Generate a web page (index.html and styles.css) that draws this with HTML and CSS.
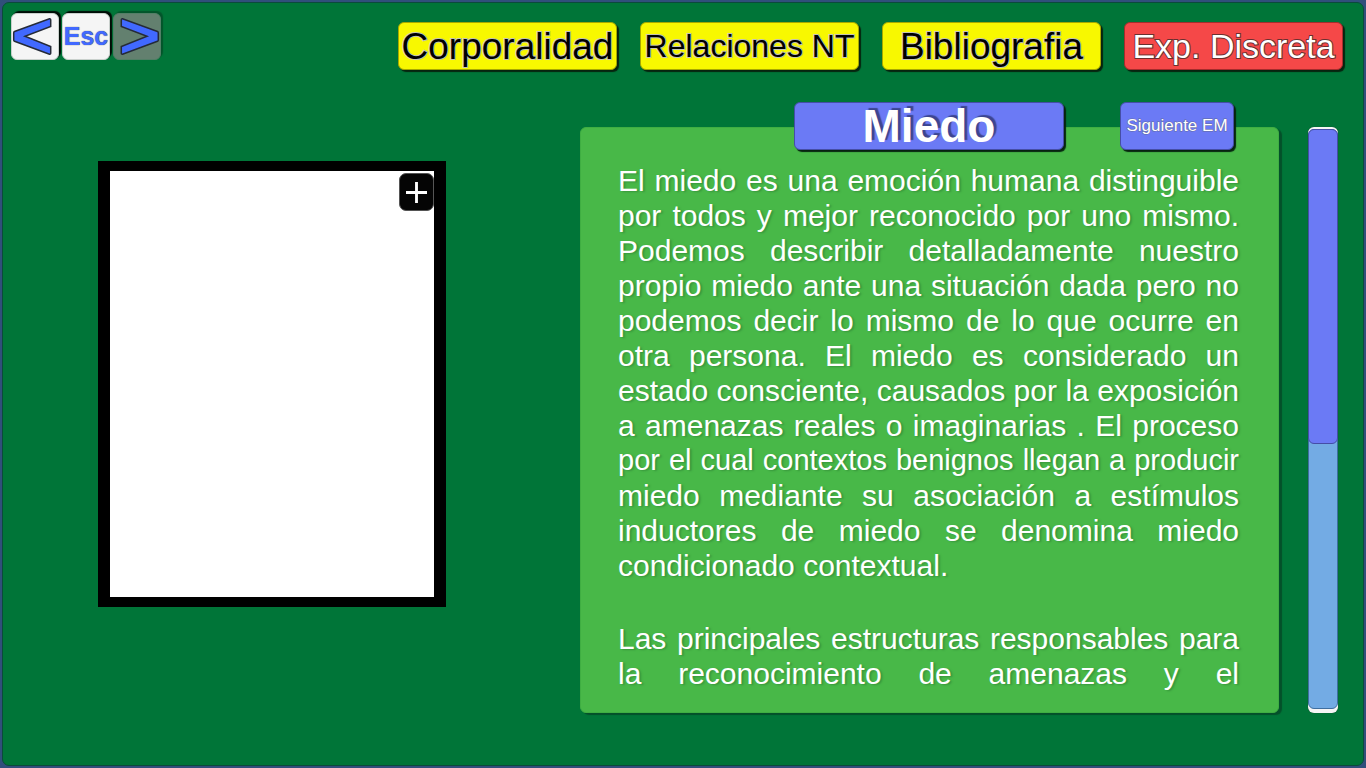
FILE: index.html
```html
<!DOCTYPE html>
<html lang="es">
<head>
<meta charset="utf-8">
<meta name="viewport" content="width=device-width, initial-scale=1">
<title>Miedo</title>
<link rel="stylesheet" href="styles.css">
</head>
<body>
<div class="screen">
  <header class="topbar">
    <nav class="history" aria-label="Navegación">
      <button class="key" type="button" aria-label="Anterior">
        <svg class="key-icon" viewBox="1 1 46 45" aria-hidden="true"><path d="M3.500 18.500 38.500 5.700Q39.700 5.500 39.700 7V13.500L14 23.300 39.700 33.500V40Q39.700 41.500 38.500 41.200L3.500 28.300Q2.700 28 2.700 27V20Q2.700 18.800 3.500 18.500Z"/></svg>
      </button>
      <button class="key" type="button">Esc</button>
      <button class="key key-off" type="button" aria-label="Siguiente" disabled>
        <svg class="key-icon" viewBox="1 1 46 45" aria-hidden="true"><path d="M44.500 18.500 9.500 5.700Q8.300 5.500 8.300 7V13.500L34 23.300 8.300 33.500V40Q8.300 41.500 9.500 41.200L44.500 28.300Q45.300 28 45.300 27V20Q45.300 18.800 44.500 18.500Z"/></svg>
      </button>
    </nav>
    <div class="actions">
      <button class="btn btn-yellow text-l" type="button">Corporalidad</button>
      <button class="btn btn-yellow text-m" type="button">Relaciones NT</button>
      <button class="btn btn-yellow text-l" type="button">Bibliografia</button>
      <button class="btn btn-red" type="button">Exp. Discreta</button>
    </div>
  </header>
  <main class="content">
    <div class="viewer">
      <button class="zoom" type="button" aria-label="Ampliar">
        <svg class="zoom-icon" viewBox="0 0 22 22" aria-hidden="true"><path d="M11 0V22M0 11H22"/></svg>
      </button>
    </div>
    <article class="panel">
      <div class="tabs">
        <h1 class="title">Miedo</h1>
        <button class="btn btn-blue" type="button">Siguiente EM</button>
      </div>
      <p class="copy">
        <span class="line">El miedo es una emoción humana distinguible</span>
        <span class="line">por todos y mejor reconocido por uno mismo.</span>
        <span class="line">Podemos describir detalladamente nuestro</span>
        <span class="line">propio miedo ante una situación dada pero no</span>
        <span class="line">podemos decir lo mismo de lo que ocurre en</span>
        <span class="line">otra persona. El miedo es considerado un</span>
        <span class="line">estado consciente, causados por la exposición</span>
        <span class="line">a amenazas reales o imaginarias . El proceso</span>
        <span class="line line-long">por el cual contextos benignos llegan a producir</span>
        <span class="line">miedo mediante su asociación a estímulos</span>
        <span class="line">inductores de miedo se denomina miedo</span>
        <span class="line line-end">condicionado contextual.</span>
      </p>
      <p class="copy">
        <span class="line">Las principales estructuras responsables para</span>
        <span class="line">la reconocimiento de amenazas y el</span>
      </p>
    </article>
    <div class="scroll"><div class="track"><div class="thumb"></div></div></div>
  </main>
</div>
</body>
</html>
```

FILE: styles.css
```css
* { box-sizing: border-box; }

body {
  margin: 0;
  padding: 2px;
  min-height: 100vh;
  display: flex;
  background: #304f7b;
  font-family: "Liberation Sans", Arial, sans-serif;
}

.screen {
  flex: 1;
  border: 1px solid #0b4a3c;
  border-radius: 7px;
  background: #007538;
}

button {
  margin: 0;
  padding: 0;
  font-family: inherit;
  white-space: nowrap;
  cursor: pointer;
}

.topbar {
  display: flex;
  justify-content: space-between;
  padding: 10px 20px 0 8px;
}

.history { display: flex; gap: 3px; }

.key {
  width: 48px;
  height: 47px;
  border: 1px solid #c9d0cc;
  border-radius: 6px;
  background: #f5f5f5;
  box-shadow: 2px -2px 1px #000c06;
  color: #4169ff;
  font-size: 25px;
  font-weight: bold;
  text-shadow: 0 0 1px #252b38;
}

.key-off {
  border-color: #527f66;
  background: #63806f;
  box-shadow: 2px -2px 1px #03552b;
}

.key-icon {
  display: block;
  width: 100%;
  height: 100%;
  fill: #4169ff;
  stroke: #252b38;
  stroke-width: 1.5;
  overflow: visible;
}

.actions { display: flex; gap: 23px; padding-top: 9px; }

.btn {
  width: 219px;
  height: 48px;
  padding-top: 1px;
  border: 1px solid;
  border-radius: 6px;
  box-shadow: 2px 2px 1px #06240f;
  paint-order: stroke fill;
}

.btn-yellow {
  border-color: #a8a800;
  background: #f8f800;
  color: #000;
  -webkit-text-stroke: 2px #c4c4b4;
}

.btn-red {
  border-color: #a52c2c;
  background: #f54848;
  color: #fff;
  font-size: 34px;
  -webkit-text-stroke: 2px #6a3030;
}

.btn-blue {
  width: 114px;
  padding: 0;
  border-color: #454ea6;
  background: #6b7af5;
  color: #fff;
  font-size: 17px;
  -webkit-text-stroke: 1px #626a9c;
}

.text-l { font-size: 37px; }
.text-m { font-size: 32px; }

.content {
  display: flex;
  align-items: flex-start;
  padding: 57px 25px 52px 95px;
}

.viewer {
  position: relative;
  width: 348px;
  height: 446px;
  margin: 34px auto 0 0;
  border: solid #000;
  border-width: 10px 12px;
  background: #fff;
}

.zoom {
  position: absolute;
  top: 2px;
  right: 0;
  width: 35px;
  height: 38px;
  padding: 6px;
  border: 1px solid #555;
  border-radius: 7px;
  background: #050505;
}

.zoom-icon {
  display: block;
  width: 100%;
  stroke: #fff;
  stroke-width: 3;
}

.panel {
  position: relative;
  flex: 0 1 699px;
  padding: 35px 39px 21px 37px;
  border: 1px solid #3fae42;
  border-radius: 6px;
  background: #48b848;
  box-shadow: 3px 2px 1px #04502a;
}

.tabs {
  position: absolute;
  top: -26px;
  right: 44px;
  display: flex;
  gap: 56px;
}

.title {
  width: 270px;
  height: 48px;
  margin: 0;
  border: 1px solid #454ea6;
  border-radius: 6px;
  background: #6b7af5;
  box-shadow: 2px 2px 1px #06240f;
  color: #fff;
  font-size: 46px;
  line-height: 46px;
  text-align: center;
  text-shadow: 3px -2px 1px #3c4590;
}

.copy {
  margin: 0 0 38px;
  color: #fff;
  font-size: 30px;
  line-height: 35px;
  text-shadow: 2px 1px 2px #38963c;
}

.copy:last-child { margin-bottom: 0; }

.line {
  display: block;
  text-align-last: justify;
  white-space: nowrap;
}

.line-long { font-size: 29px; }

.line-end { text-align-last: left; }

.scroll {
  align-self: stretch;
  width: 30px;
  margin-left: 29px;
  padding: 2px 0 4px;
  border-radius: 6px;
  background: #f5f5f5;
  box-shadow: 0 0 1px #204030;
}

.track {
  height: 100%;
  border: 1px solid #3f6fa0;
  border-radius: 6px;
  background: #73abe4;
}

.thumb {
  height: 54.5%;
  margin: -1px;
  border: 1px solid #454ea6;
  border-radius: 6px;
  background: #6b7af5;
}
```
